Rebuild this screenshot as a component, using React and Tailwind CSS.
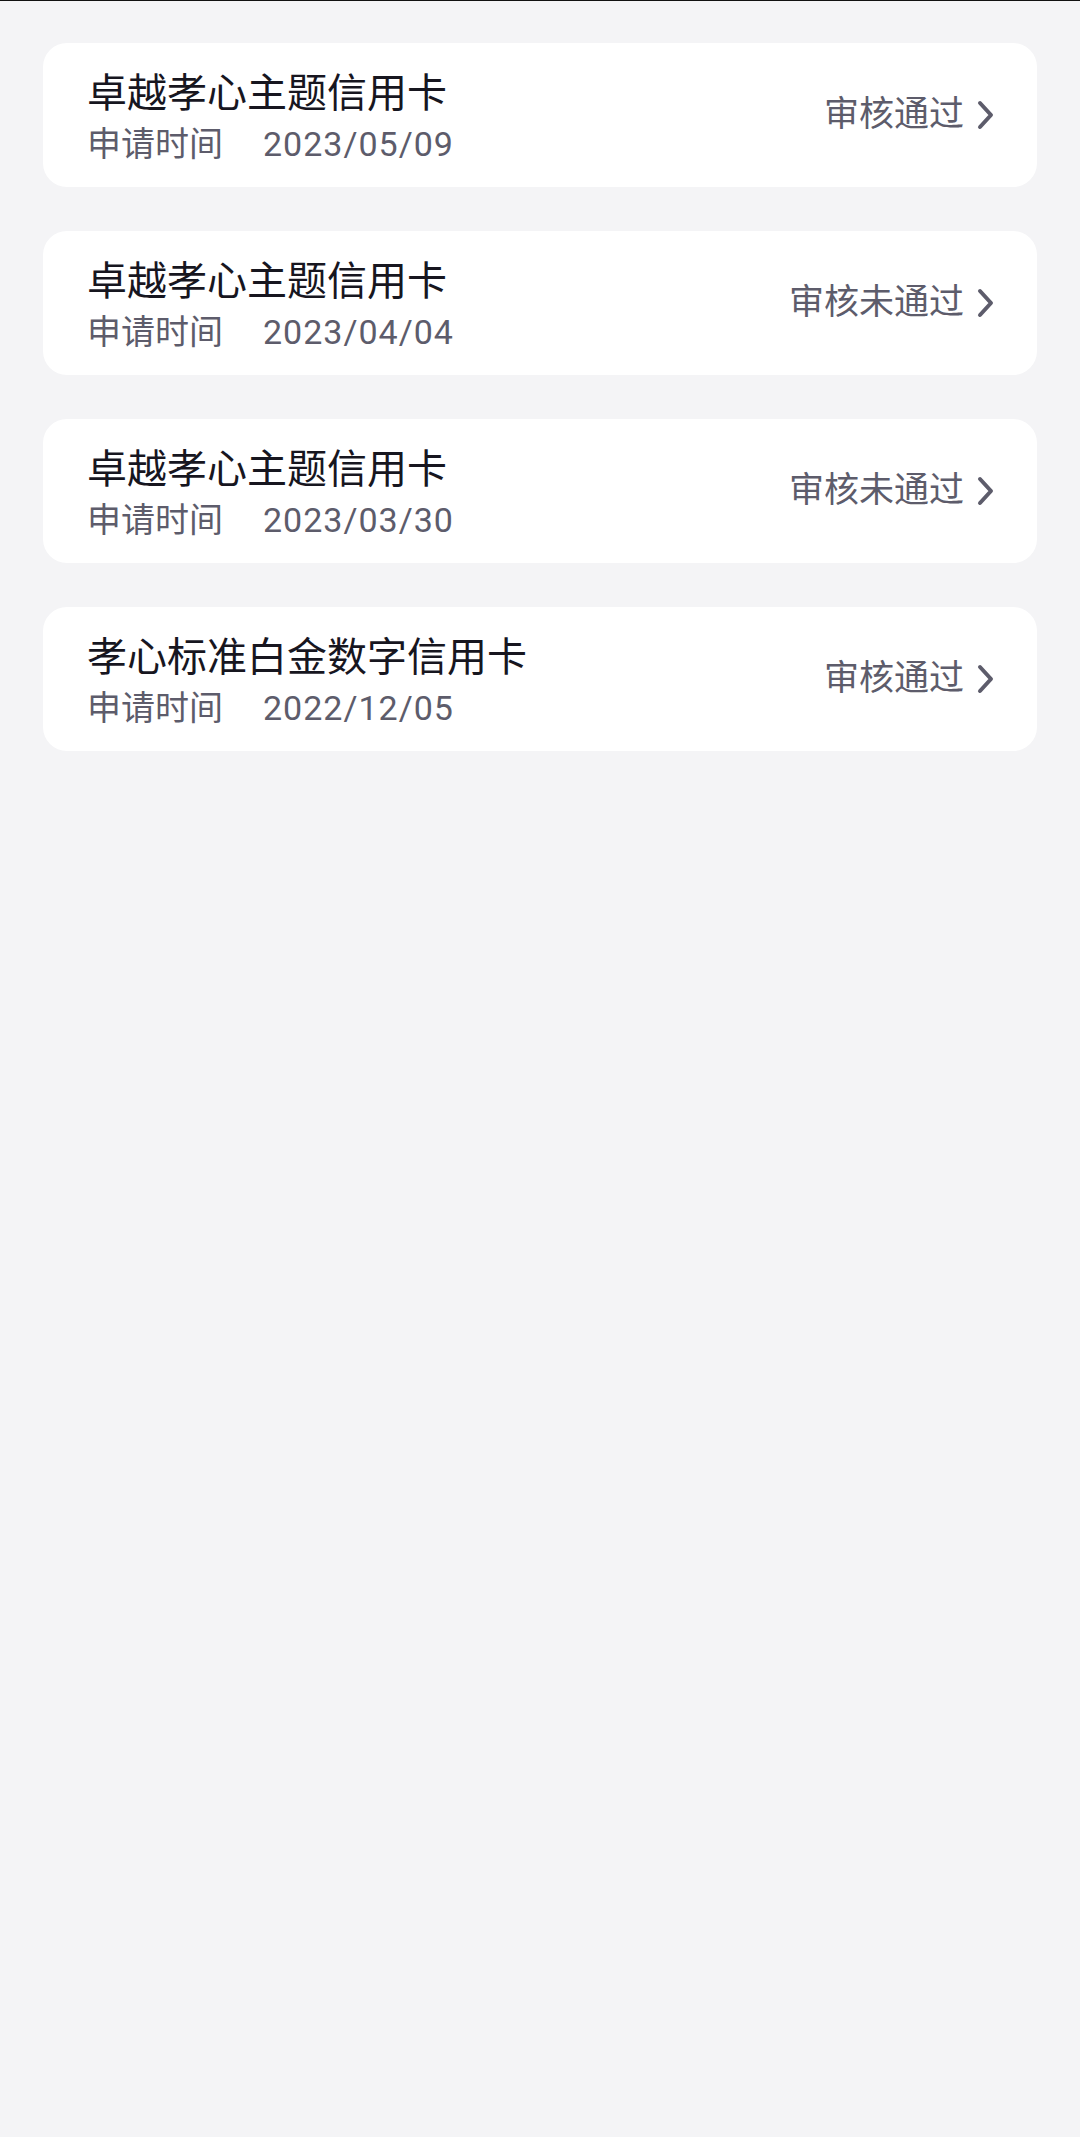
import React from 'react';

const records = [
  { name: '卓越孝心主题信用卡', date: '2023/05/09', status: '审核通过' },
  { name: '卓越孝心主题信用卡', date: '2023/04/04', status: '审核未通过' },
  { name: '卓越孝心主题信用卡', date: '2023/03/30', status: '审核未通过' },
  { name: '孝心标准白金数字信用卡', date: '2022/12/05', status: '审核通过' },
];

const Chevron = () => (
  <svg width="18" height="30" viewBox="0 0 18 30" fill="none">
    <path d="M3 3 L14 15 L3 27" stroke="#5d5c6b" strokeWidth="4" strokeLinecap="round" strokeLinejoin="round" />
  </svg>
);

const App = () => {
  return (
    <div
      className="min-h-[2137px] bg-[#f4f4f6] border-t border-[#111]"
      style={{ fontFamily: "Roboto, 'Noto Sans CJK SC', sans-serif" }}
    >
      <div className="flex flex-col gap-[44px] px-[43px] pt-[42px]">
        {records.map((r, i) => (
          <div key={i} className="h-[144px] bg-white rounded-[24px] flex items-center justify-between pl-[44px] pr-[42px]">
            <div className="flex flex-col pt-[6px]">
              <div className="text-[40px] leading-[50px] text-[#17161f]">{r.name}</div>
              <div className="flex text-[34px] leading-[46px] mt-[2px] text-[#5d5c6b]">
                <span>申请时间</span>
                <span className="ml-[40px] tracking-[1px]">{r.date}</span>
              </div>
            </div>
            <div className="flex items-center gap-[13px] text-[35px] text-[#5d5c6b]">
              <span>{r.status}</span>
              <Chevron />
            </div>
          </div>
        ))}
      </div>
    </div>
  );
};

export default App;
